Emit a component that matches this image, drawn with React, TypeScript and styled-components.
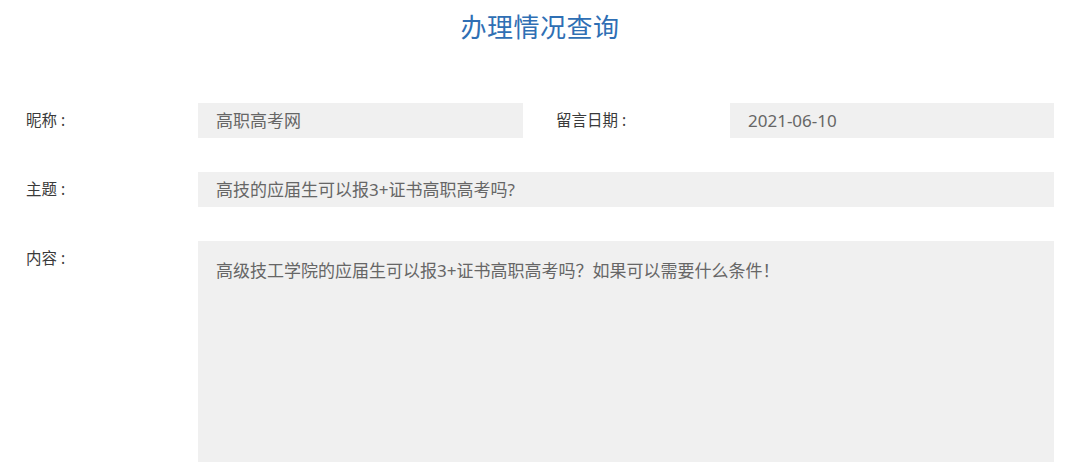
import React from "react";
import styled, { createGlobalStyle } from "styled-components";

const Global = createGlobalStyle`
  html, body {
    margin: 0;
    padding: 0;
    background: #ffffff;
    overflow: hidden;
  }
  body {
    font-family: "Noto Sans", "Noto Sans CJK SC", sans-serif;
  }
`;

const Page = styled.div`
  width: 1080px;
  height: 462px;
  overflow: hidden;
  box-sizing: border-box;
  padding: 0 26px;
`;

const Title = styled.h1`
  margin: 0;
  padding-top: 12px;
  height: 103px;
  box-sizing: border-box;
  text-align: center;
  font-size: 26px;
  line-height: 30px;
  font-weight: 400;
  color: #2f6fb4;
  letter-spacing: 0.5px;
`;

const Form = styled.div`
  display: grid;
  grid-template-columns: 172px 325px 207px 324px;
  row-gap: 34px;
`;

const Label = styled.div<{ $indent?: number }>`
  align-self: start;
  height: 35px;
  line-height: 35px;
  padding-left: ${(p) => p.$indent ?? 0}px;
  font-size: 15.5px;
  color: #3a3a3a;
`;

const Colon = styled.span`
  margin-left: 4px;
`;

const Field = styled.div<{ $span?: number }>`
  grid-column: span ${(p) => p.$span ?? 1};
  height: 35px;
  line-height: 35px;
  padding: 0 18px;
  background: #f0f0f0;
  font-size: 17px;
  color: #666666;
  white-space: nowrap;
  overflow: hidden;
`;

const Area = styled.div`
  grid-column: span 3;
  height: 280px;
  padding: 17px 18px;
  box-sizing: border-box;
  background: #f0f0f0;
  font-size: 17px;
  line-height: 26px;
  color: #666666;
`;

export default function App() {
  return (
    <>
      <Global />
      <Page>
        <Title>办理情况查询</Title>
        <Form>
          <Label>昵称<Colon>:</Colon></Label>
          <Field>高职高考网</Field>
          <Label $indent={33}>留言日期<Colon>:</Colon></Label>
          <Field>2021-06-10</Field>

          <Label>主题<Colon>:</Colon></Label>
          <Field $span={3}>高技的应届生可以报3+证书高职高考吗?</Field>

          <Label>内容<Colon>:</Colon></Label>
          <Area>高级技工学院的应届生可以报3+证书高职高考吗？如果可以需要什么条件！</Area>
        </Form>
      </Page>
    </>
  );
}
